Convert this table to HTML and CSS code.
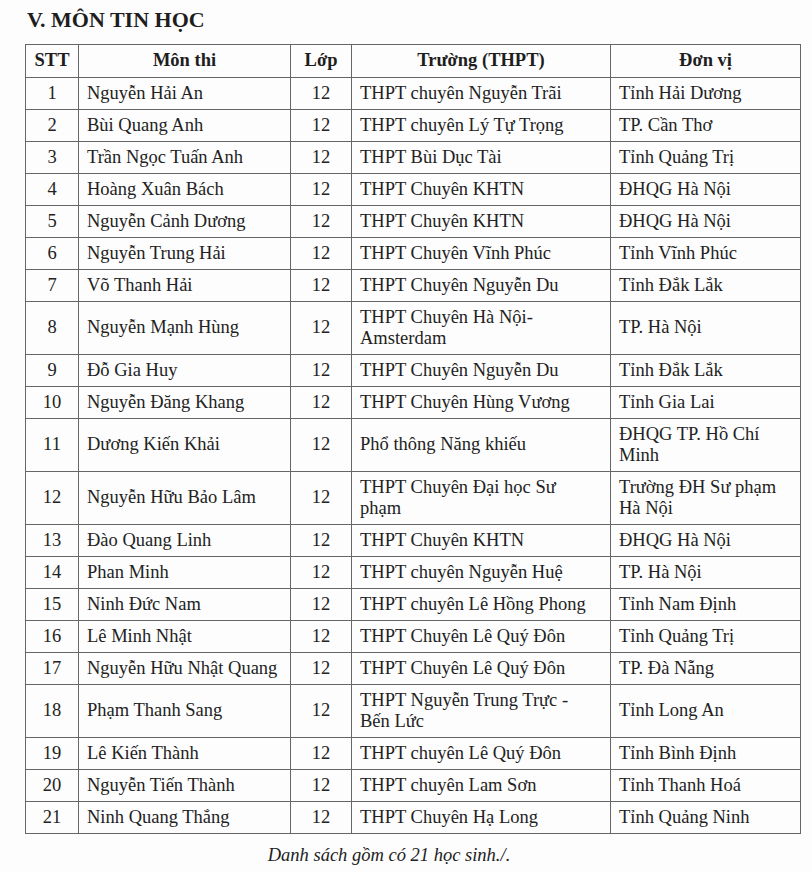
FILE: index.html
```html
<!DOCTYPE html>
<html lang="vi">
<head>
<meta charset="utf-8">
<title>V. MÔN TIN HỌC</title>
<link rel="stylesheet" href="styles.css">
</head>
<body>
<div class="page">
  <h1 class="title">V. MÔN TIN HỌC</h1>
  <table class="list">
    <colgroup>
      <col class="c-stt"><col class="c-name"><col class="c-class"><col class="c-school"><col class="c-unit">
    </colgroup>
    <thead>
      <tr class="head"><th>STT</th><th>Môn thi</th><th>Lớp</th><th>Trường (THPT)</th><th>Đơn vị</th></tr>
    </thead>
    <tbody>
      <tr><td class="num">1</td><td>Nguyễn Hải An</td><td class="num">12</td><td>THPT chuyên Nguyễn Trãi</td><td>Tỉnh Hải Dương</td></tr>
      <tr><td class="num">2</td><td>Bùi Quang Anh</td><td class="num">12</td><td>THPT chuyên Lý Tự Trọng</td><td>TP. Cần Thơ</td></tr>
      <tr><td class="num">3</td><td>Trần Ngọc Tuấn Anh</td><td class="num">12</td><td>THPT Bùi Dục Tài</td><td>Tỉnh Quảng Trị</td></tr>
      <tr><td class="num">4</td><td>Hoàng Xuân Bách</td><td class="num">12</td><td>THPT Chuyên KHTN</td><td>ĐHQG Hà Nội</td></tr>
      <tr><td class="num">5</td><td>Nguyễn Cảnh Dương</td><td class="num">12</td><td>THPT Chuyên KHTN</td><td>ĐHQG Hà Nội</td></tr>
      <tr><td class="num">6</td><td>Nguyễn Trung Hải</td><td class="num">12</td><td>THPT Chuyên Vĩnh Phúc</td><td>Tỉnh Vĩnh Phúc</td></tr>
      <tr><td class="num">7</td><td>Võ Thanh Hải</td><td class="num">12</td><td>THPT Chuyên Nguyễn Du</td><td>Tỉnh Đắk Lắk</td></tr>
      <tr class="tall"><td class="num">8</td><td>Nguyễn Mạnh Hùng</td><td class="num">12</td><td>THPT Chuyên Hà Nội-<br>Amsterdam</td><td>TP. Hà Nội</td></tr>
      <tr><td class="num">9</td><td>Đỗ Gia Huy</td><td class="num">12</td><td>THPT Chuyên Nguyễn Du</td><td>Tỉnh Đắk Lắk</td></tr>
      <tr><td class="num">10</td><td>Nguyễn Đăng Khang</td><td class="num">12</td><td>THPT Chuyên Hùng Vương</td><td>Tỉnh Gia Lai</td></tr>
      <tr class="tall"><td class="num">11</td><td>Dương Kiến Khải</td><td class="num">12</td><td>Phổ thông Năng khiếu</td><td>ĐHQG TP. Hồ Chí<br>Minh</td></tr>
      <tr class="tall"><td class="num">12</td><td>Nguyễn Hữu Bảo Lâm</td><td class="num">12</td><td>THPT Chuyên Đại học Sư<br>phạm</td><td>Trường ĐH Sư phạm<br>Hà Nội</td></tr>
      <tr><td class="num">13</td><td>Đào Quang Linh</td><td class="num">12</td><td>THPT Chuyên KHTN</td><td>ĐHQG Hà Nội</td></tr>
      <tr><td class="num">14</td><td>Phan Minh</td><td class="num">12</td><td>THPT chuyên Nguyễn Huệ</td><td>TP. Hà Nội</td></tr>
      <tr><td class="num">15</td><td>Ninh Đức Nam</td><td class="num">12</td><td>THPT chuyên Lê Hồng Phong</td><td>Tỉnh Nam Định</td></tr>
      <tr><td class="num">16</td><td>Lê Minh Nhật</td><td class="num">12</td><td>THPT Chuyên Lê Quý Đôn</td><td>Tỉnh Quảng Trị</td></tr>
      <tr><td class="num">17</td><td>Nguyễn Hữu Nhật Quang</td><td class="num">12</td><td>THPT Chuyên Lê Quý Đôn</td><td>TP. Đà Nẵng</td></tr>
      <tr class="tall"><td class="num">18</td><td>Phạm Thanh Sang</td><td class="num">12</td><td>THPT Nguyễn Trung Trực -<br>Bến Lức</td><td>Tỉnh Long An</td></tr>
      <tr><td class="num">19</td><td>Lê Kiến Thành</td><td class="num">12</td><td>THPT chuyên Lê Quý Đôn</td><td>Tỉnh Bình Định</td></tr>
      <tr><td class="num">20</td><td>Nguyễn Tiến Thành</td><td class="num">12</td><td>THPT chuyên Lam Sơn</td><td>Tỉnh Thanh Hoá</td></tr>
      <tr><td class="num">21</td><td>Ninh Quang Thắng</td><td class="num">12</td><td>THPT Chuyên Hạ Long</td><td>Tỉnh Quảng Ninh</td></tr>
    </tbody>
  </table>
  <p class="note">Danh sách gồm có 21 học sinh./.</p>
</div>
</body>
</html>
```
FILE: styles.css
```css
html, body {
  margin: 0;
  padding: 0;
  background: #fdfdfd;
}

.page {
  padding: 6px 0 0 25px;
  font-family: "Liberation Serif", "Times New Roman", serif;
  color: #222;
}

.title {
  margin: 0 0 11px 2px;
  font-size: 22px;
  line-height: 27px;
  font-weight: bold;
  color: #1e1e1e;
}

.list {
  border-collapse: collapse;
  width: 775px;
  table-layout: fixed;
  font-size: 18.5px;
  line-height: 21.5px;
}

.c-stt { width: 53px; }
.c-name { width: 212px; }
.c-class { width: 61px; }
.c-school { width: 259px; }
.c-unit { width: 190px; }

.list th,
.list td {
  border: 1px solid #666;
  padding: 0 8px;
  vertical-align: middle;
  text-align: left;
  white-space: nowrap;
}

.list th {
  text-align: center;
  font-weight: bold;
  color: #1e1e1e;
}

.list tr {
  height: 32px;
}

.list tr.head {
  height: 33px;
}

.list tr.tall {
  height: 53px;
}

.list td.num {
  text-align: center;
  padding: 0;
}

.note {
  margin: 10px 0 0 0;
  width: 728px;
  text-align: center;
  font-style: italic;
  font-size: 18.5px;
  line-height: 22px;
}
```
